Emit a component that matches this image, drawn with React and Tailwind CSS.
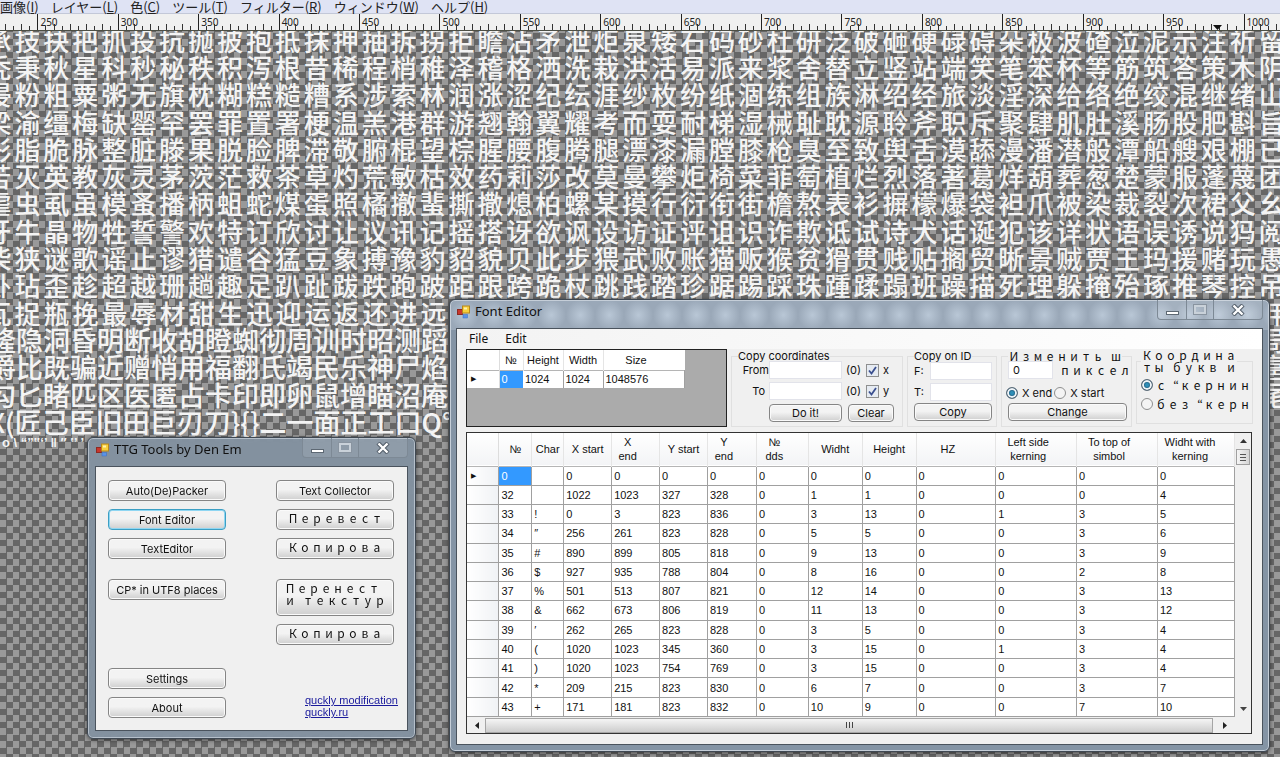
import { useState } from "react";

const menus = [
  ["画像", "I"],
  ["レイヤー", "L"],
  ["色", "C"],
  ["ツール", "T"],
  ["フィルター", "R"],
  ["ウィンドウ", "W"],
  ["ヘルプ", "H"],
];

const rulerMarks = [200, 250, 300, 350, 400, 450, 500, 550, 600, 650, 700, 750, 800, 850, 900, 950, 1000];

// full rows of the glyph atlas, 45 cells each
const wideRows = [
  "承技抉把抓投抗抛披抱抵抹押抽拆拐拒瞻沾矛泄炬泉矮石码砂杜研泛破砸硬碌碍朵极波碴泣泥示注祈留",
  "秃秉秋星科秒秘秩积泻根昔稀程梢稚泽稽格洒洗栽洪活易派来浆舍替立竖站端笑笔笨杯等筋筑答策木阴",
  "侵粉粗粟粥无旗枕糊糕糙糟系涉索林润涨涩纪纭涯纱枚纷纸涸练组族淋绍经旅淡淫深给络绝绞混继绪山",
  "梁渝缰梅缺罂罕罢罪置署梗温羔港群游翘翰翼耀考而耍耐梯湿械耻耽源聆斧职斥聚肆肌肚溪肠股肥斟旨",
  "彤脂脆脉整脏滕果脱脸脾滞敬腑棍望棕腥腰腹腾腿漂漆漏膛膝枪臭至致舆舌漠舔漫潘潜般潭船艘艰棚已",
  "苦灭英教灰灵茅茨茫救茶草灼荒敏枯效药莉莎改莫曼攀炬椅菜菲萄植烂烈落著葛烊葫葬葱楚蒙服蓬蔑团",
  "虐虫虱虽模蚤播柄蛆蛇煤蛋照橘撤蜚撕撒熄柏螺某摸行衍衔街檐熬表衫摒檬爆袋袒爪被染裁裂次裙父幺",
  "牙牛晶物牲誓警欢特订欣讨让议讯记摇搭讶欲讽设访证评诅识诈欺诋试诗犬话诞犯该详状语误诱说犸阅",
  "柴狭谜歌谣止谬猎谴谷猛豆象搏豫豹貂貌贝此步猥武败账猫贩猴贫猾贯贱贴搁贸晰景贼贾王玛援赌玩愚",
  "卧玷歪趁超越珊趟趣足趴趾跋跌跑跛距跟跨跪杖跳践踏珍踞踢踩珠踵蹂蹋班躁描死理躲掩殆琢推琴控吊",
];

// rows that run behind the editor window, with the glyph that shows again at its right
const narrowRows = [
  ["隆隐洞昏明断收胡瞪蜘彻周训时昭测蹈", "局"],
  ["爵比既骗近赠悄用福翻氏竭民乐神尸焰", "扈"],
  ["勾匕睹匹区医匿占卡印即卵鼠增瞄沼庵", "尾"],
  ["X(匠己臣旧田巨刃刀}{}二一面正工口Q°", ""],
];

const fontColumns = [
  { label: "№", width: "w-[33px]" },
  { label: "Char", width: "w-8" },
  { label: "X start", width: "w-12" },
  { label: "X\nend", width: "w-12", pad: "pr-4" },
  { label: "Y start", width: "w-12" },
  { label: "Y\nend", width: "w-[49px]", pad: "pr-4" },
  { label: "№\ndds", width: "w-[52px]", pad: "pr-4" },
  { label: "Widht", width: "w-[54px]" },
  { label: "Height", width: "w-[54px]" },
  { label: "HZ", width: "w-20", pad: "pr-4" },
  { label: "Left side\nkerning", width: "w-[81px]", pad: "pr-4" },
  { label: "To top of\nsimbol", width: "w-[81px]", pad: "pr-4" },
  { label: "Widht with\nkerning", width: "w-[77px]", pad: "pr-3" },
];

const fontRows = [
  ["0", "", "0", "0", "0", "0", "0", "0", "0", "0", "0", "0", "0"],
  ["32", "", "1022", "1023", "327", "328", "0", "1", "1", "0", "0", "0", "4"],
  ["33", "!", "0", "3", "823", "836", "0", "3", "13", "0", "1", "3", "5"],
  ["34", "″", "256", "261", "823", "828", "0", "5", "5", "0", "0", "3", "6"],
  ["35", "#", "890", "899", "805", "818", "0", "9", "13", "0", "0", "3", "9"],
  ["36", "$", "927", "935", "788", "804", "0", "8", "16", "0", "0", "2", "8"],
  ["37", "%", "501", "513", "807", "821", "0", "12", "14", "0", "0", "3", "13"],
  ["38", "&", "662", "673", "806", "819", "0", "11", "13", "0", "0", "3", "12"],
  ["39", "′", "262", "265", "823", "828", "0", "3", "5", "0", "0", "3", "4"],
  ["40", "(", "1020", "1023", "345", "360", "0", "3", "15", "0", "1", "3", "4"],
  ["41", ")", "1020", "1023", "754", "769", "0", "3", "15", "0", "0", "3", "4"],
  ["42", "*", "209", "215", "823", "830", "0", "6", "7", "0", "0", "3", "7"],
  ["43", "+", "171", "181", "823", "832", "0", "10", "9", "0", "0", "7", "10"],
];

function AppIcon() {
  return (
    <svg width="14" height="14" viewBox="0 0 14 14">
      <rect x="0.5" y="4.5" width="5" height="5" fill="#c8372d" stroke="#8f2a22" />
      <rect x="5.5" y="1" width="7" height="7" fill="#f7cf3c" stroke="#b8871a" />
      <rect x="7" y="2.5" width="3" height="2" fill="#fff2b0" />
      <rect x="6" y="9.5" width="4.5" height="3.5" fill="#5b93e6" stroke="#3b6cc0" strokeWidth="0.5" />
    </svg>
  );
}

function CaptionButtons() {
  return (
    <div className="flex h-5 rounded-b border border-t-0 border-[#7d8995] bg-white/10">
      <button aria-label="Minimize" className="flex w-[29px] items-end justify-center border-r border-[#7d8995] pb-1">
        <span className="h-1 w-[13px] border border-[#5d6873] bg-white" />
      </button>
      <button aria-label="Maximize" className="flex w-[27px] items-center justify-center border-r border-[#7d8995]">
        <span className="h-[9px] w-3 border-2 border-[#c9d1d9] outline outline-[#8994a0]" />
      </button>
      <button aria-label="Close" className="flex w-12 items-center justify-center">
        <svg width="14" height="12" viewBox="0 0 14 12">
          <path d="M2 1l10 10M12 1l-10 10" stroke="#55606c" strokeWidth="4.4" />
          <path d="M2.5 1.5l9 9M11.5 1.5l-9 9" stroke="#fff" strokeWidth="2.4" />
        </svg>
      </button>
    </div>
  );
}

function TitleBar({ title }) {
  return (
    <div className="flex h-7 items-start justify-between">
      <div className="flex h-6 items-center gap-1 pl-px">
        <AppIcon />
        <h2 className="font-['Noto_Sans',sans-serif] text-[13px] text-[#111]">{title}</h2>
      </div>
      <CaptionButtons />
    </div>
  );
}

// Cyrillic falls back to the full-width forms of the Japanese system font
function WideText({ text }) {
  return (
    <span className="inline-flex font-['Noto_Sans_CJK_JP',sans-serif] text-[12px] leading-3 whitespace-pre">
      {[...text].map((char, i) => (
        <span key={i} className={char === " " || char === "“" ? "w-1.5 text-center" : "w-3 text-center"}>
          {char}
        </span>
      ))}
    </span>
  );
}

function WinButton({ children, className = "h-[21px]", active }) {
  return (
    <button
      className={`flex w-full items-center justify-center overflow-hidden rounded-sm border bg-linear-to-b from-[#f3f3f3] from-45% to-[#cfcfcf] to-100% font-['Inter',sans-serif] text-[11px] leading-3 text-[#111] ${
        active ? "border-[#3c9fc4] shadow-[inset_0_0_0_1px_#8fd6f2]" : "border-[#858585] shadow-[inset_0_0_0_1px_#fafafa]"
      } ${className}`}
    >
      {children}
    </button>
  );
}

function TextField({ label, id, labelWidth, value = "" }) {
  return (
    <>
      <label htmlFor={id} className={labelWidth}>
        {label}
      </label>
      <input id={id} defaultValue={value} className="h-[18px] w-full min-w-0 border border-[#e2e3ea] bg-white px-1" />
    </>
  );
}

function RadioOption({ name, label, checked, className = "gap-1" }) {
  return (
    <label className={`flex items-center whitespace-nowrap ${className}`}>
      <input
        type="radio"
        name={name}
        defaultChecked={checked}
        className="size-3 shrink-0 appearance-none rounded-full border border-[#8e8f8f] bg-[#f4f4f4] checked:border-[#5a6b78] checked:bg-radial checked:from-[#2f8fb8] checked:from-20% checked:to-[#0f3c5a] checked:to-60% checked:shadow-[inset_0_0_0_2px_#eef4f8]"
      />
      {label}
    </label>
  );
}

function AxisCheck({ label }) {
  const [checked, setChecked] = useState(true);
  return (
    <label className="flex items-center gap-1">
      <span className="grid size-[13px] place-items-center border border-[#8e8f8f] bg-[#e6ebf2]">
        <input
          type="checkbox"
          checked={checked}
          onChange={(e) => setChecked(e.target.checked)}
          className="col-start-1 row-start-1 size-[11px] appearance-none"
        />
        {checked && (
          <svg width="9" height="9" viewBox="0 0 9 9" className="pointer-events-none col-start-1 row-start-1">
            <path d="M1 4.5L3.5 7.5L8 1" fill="none" stroke="#3a4f8f" strokeWidth="1.8" />
          </svg>
        )}
      </span>
      {label}
    </label>
  );
}

function Ruler() {
  return (
    <div className="overflow-hidden border-t border-b border-t-[#c3c8d8] border-b-[#4d4f45] bg-[#f0f0f0]">
      <div className="-mr-[44px] -ml-[43px] flex h-4">
        {rulerMarks.map((mark) => (
          <div key={mark} className="flex-1 border-l border-[#222] font-['Noto_Sans',sans-serif] text-[10px] text-[#222]">
            <div className="grid h-4">
              <span className="col-start-1 row-start-1 pl-0.5 leading-4">{mark}</span>
              <div className="col-start-1 row-start-1 flex items-end">
                {[0, 1, 2, 3, 4, 5, 6, 7, 8, 9].map((n) => (
                  <span
                    key={n}
                    className={`flex-1 ${n === 0 ? "" : "border-l border-[#333]"} ${n % 2 === 0 ? "h-1.5" : "h-1"}`}
                  />
                ))}
              </div>
            </div>
          </div>
        ))}
      </div>
    </div>
  );
}

function GlyphAtlas() {
  return (
    <div className="overflow-hidden font-['Noto_Sans_CJK_SC',sans-serif] text-[26px] font-medium text-[#f4f4f4]">
      <div className="-mt-[5px] -mr-1.5 -ml-4 flex h-[273px] flex-col">
        {wideRows.map((row) => (
          <div key={row} className="flex flex-1 items-center text-center leading-none">
            {[...row].map((glyph, i) => (
              <span key={i} className="w-0 flex-1 whitespace-nowrap">
                {glyph}
              </span>
            ))}
          </div>
        ))}
      </div>
      <div className="-ml-4 flex h-[27px] items-center text-center leading-none">
        {[..."瓦捉瓶挽最辱材甜生迅迎运返还进远"].map((glyph) => (
          <span key={glyph} className="w-[29px]">
            {glyph}
          </span>
        ))}
        <span className="ml-auto w-4">用</span>
      </div>
      <div className="-mr-1.5 -ml-[11px] flex h-[109px] flex-col text-[27px]">
        {narrowRows.map(([row, last]) => (
          <div key={row} className="flex flex-1 items-center justify-between leading-none whitespace-nowrap">
            <span>{row}</span>
            <span>{last}</span>
          </div>
        ))}
      </div>
      <div className="pt-0.5 pl-0.5 font-['Liberation_Sans',sans-serif] text-[13px] leading-3 font-bold whitespace-nowrap">
        o \ “”‟‘’ ‖ ′′ ‛’ ’ ·
      </div>
    </div>
  );
}

function ToolsWindow() {
  return (
    <section className="absolute top-[437px] left-[87px] w-[329px] rounded-md border border-[#3f4852] bg-[#8494a5]/85 px-[7px] pb-[7px] shadow-[0_1px_4px_#0008,inset_0_0_0_1px_#b5bfca] backdrop-blur-xs">
      <TitleBar title="TTG Tools by Den Em" />
      <div className="flex gap-[50px] border border-[#4a535d] bg-[#f0f0f0] pt-[13px] pr-1 pb-3 pl-3">
        <div className="flex w-[118px] flex-col gap-2">
          <WinButton>Auto(De)Packer</WinButton>
          <WinButton active>Font Editor</WinButton>
          <WinButton>TextEditor</WinButton>
          <WinButton className="mt-3 h-[21px]">CP* in UTF8 places</WinButton>
          <WinButton className="mt-[60px] h-[21px]">Settings</WinButton>
          <WinButton>About</WinButton>
        </div>
        <div className="flex flex-1 flex-col gap-2">
          <div className="flex w-[118px] flex-col gap-2">
            <WinButton>Text Collector</WinButton>
            <WinButton className="h-[21px] pb-1">
              <WideText text="Перевест" />
            </WinButton>
            <WinButton className="h-[21px] pb-1">
              <WideText text="Копирова" />
            </WinButton>
            <WinButton className="mt-3 h-[37px] pb-2">
              <span className="flex flex-col items-start">
                <WideText text="Перенест" />
                <WideText text="и текстур" />
              </span>
            </WinButton>
            <WinButton className="h-[21px] pb-1">
              <WideText text="Копирова" />
            </WinButton>
          </div>
          <div className="mt-auto flex flex-col items-start pl-[29px] text-[11px] leading-3 whitespace-nowrap text-[#1a1a9c] underline">
            <a href="#modification">quckly modification</a>
            <a href="#site">quckly.ru</a>
          </div>
        </div>
      </div>
    </section>
  );
}

function TextureTable() {
  return (
    <div className="h-[78px] w-[261px] shrink-0 border border-[#222] bg-[#ababab]">
      <table className="w-[218px] table-fixed border-collapse bg-white text-[11px] leading-3 text-[#111]">
        <thead>
          <tr className="h-5 border-b border-[#b5b5b5]">
            <th className="w-8 border-r border-[#ddd]" />
            <th className="w-6 border-r border-[#e5e5e5] font-normal">№</th>
            <th className="w-10 border-r border-[#e5e5e5] font-normal">Height</th>
            <th className="w-10 border-r border-[#e5e5e5] font-normal">Width</th>
            <th className="pr-4 font-normal">Size</th>
          </tr>
        </thead>
        <tbody>
          <tr className="h-[18px]">
            <td className="border-r border-[#ddd] pl-1 text-[7px]">▶</td>
            <td className="bg-[#3399ff] pl-0.5 text-white">0</td>
            <td className="border-r border-[#a0a0a0] pl-0.5">1024</td>
            <td className="border-r border-[#a0a0a0] pl-0.5">1024</td>
            <td className="border-r border-[#a0a0a0] pl-0.5">1048576</td>
          </tr>
        </tbody>
      </table>
    </div>
  );
}

function CopyGroups() {
  return (
    <div className="flex flex-1 items-end gap-1 pl-1 font-['Inter',sans-serif] text-[11px] leading-3 text-[#111]">
      <fieldset className="h-[77px] w-[172px] border border-[#e0e0e0] pl-1.5">
        <legend className="h-3">Copy coordinates</legend>
        <div className="-mt-px grid grid-cols-[27px_73px_16px_auto] items-center gap-x-1 gap-y-[3px]">
          <TextField id="from" label="From" labelWidth="-mr-1 text-right" />
          <span>(0)</span>
          <AxisCheck label="x" />
          <TextField id="to" label="To" labelWidth="text-right" />
          <span>(0)</span>
          <AxisCheck label="y" />
        </div>
        <div className="mt-1 ml-[31px] grid grid-cols-[73px_46px] gap-1.5">
          <WinButton className="h-[18px]">Do it!</WinButton>
          <WinButton className="h-[18px]">Clear</WinButton>
        </div>
      </fieldset>
      <fieldset className="h-[77px] w-[90px] border border-[#e0e0e0] pr-1 pl-1.5">
        <legend className="h-3 whitespace-nowrap">Copy on ID</legend>
        <div className="grid grid-cols-[12px_62px] items-center gap-x-1 gap-y-[3px]">
          <TextField id="idFrom" label="F:" />
          <TextField id="idTo" label="T:" />
        </div>
        <WinButton className="mt-0.5 h-[18px]">Copy</WinButton>
      </fieldset>
      <fieldset className="h-[77px] w-[130px] border border-[#e0e0e0] pr-1 pl-1.5">
        <legend className="h-3">
          <WideText text="Изменить ш" />
        </legend>
        <div className="-mt-px -mr-1 flex items-center gap-1.5">
          <input
            aria-label="Пиксели"
            defaultValue="0"
            className="h-[18px] w-[45px] shrink-0 border border-[#e2e3ea] bg-white px-1"
          />
          <WideText text="пиксел" />
        </div>
        <div className="-ml-0.5 flex h-6 items-center gap-0.5 pt-1">
          <RadioOption name="edge" label="X end" checked />
          <RadioOption name="edge" label="X start" />
        </div>
        <WinButton className="h-[18px]">Change</WinButton>
      </fieldset>
      <fieldset className="mb-[3px] h-[75px] w-[117px] border border-[#e0e0e0] pl-1">
        <legend className="flex h-6 flex-col">
          <WideText text="Координа" />
          <WideText text="ты букв и" />
        </legend>
        <div className="pt-0.5">
          <RadioOption name="kerning" label={<WideText text="с “кернин" />} checked className="h-[19px] gap-0.5" />
          <RadioOption name="kerning" label={<WideText text="без “керн" />} className="h-[19px] gap-0.5" />
        </div>
      </fieldset>
    </div>
  );
}

function CoordinatesTable() {
  return (
    <div className="mt-[5px] border border-[#333] bg-[#f0f0f0]">
      <div className="flex">
        <table className="h-[284px] flex-1 table-fixed border-collapse bg-white text-[11px] leading-3 text-[#111]">
          <thead>
            <tr className="h-[33px] border-b border-[#b5b5b5] bg-linear-to-b from-white to-[#f3f4f6] leading-[14px]">
              <th className="w-8 border-r border-[#ddd]" />
              {fontColumns.map((col) => (
                <th
                  key={col.label}
                  className={`border-r border-[#e5e5e5] font-normal whitespace-pre ${col.width} ${col.pad || ""}`}
                >
                  {col.label}
                </th>
              ))}
            </tr>
          </thead>
          <tbody>
            {fontRows.map((row, r) => (
              <tr key={row[0]} className="border-b border-[#a0a0a0]">
                <td className="border-r border-[#a0a0a0] bg-linear-to-r from-white to-[#f0f2f5] pl-1 text-[7px]">
                  {r === 0 ? "▶" : ""}
                </td>
                {row.map((cell, c) => (
                  <td
                    key={c}
                    className={`border-r border-[#a0a0a0] pl-0.5 ${r === 0 && c === 0 ? "bg-[#3399ff] text-white" : ""}`}
                  >
                    {cell}
                  </td>
                ))}
              </tr>
            ))}
          </tbody>
        </table>
        <div className="flex w-4 flex-col items-center py-1">
          <svg width="7" height="8" viewBox="0 0 7 8">
            <path d="M0 6l3.5-4L7 6z" fill="#333" />
          </svg>
          <div className="mt-1 flex h-4 w-[14px] flex-col items-center justify-center gap-0.5 border border-[#a0a0a0] bg-linear-to-r from-[#f5f5f5] to-[#d5d5d5]">
            <span className="h-px w-1.5 bg-[#555]" />
            <span className="h-px w-1.5 bg-[#555]" />
            <span className="h-px w-1.5 bg-[#555]" />
          </div>
          <svg width="7" height="8" viewBox="0 0 7 8" className="mt-auto">
            <path d="M0 2l3.5 4L7 2z" fill="#444" />
          </svg>
        </div>
      </div>
      <div className="flex h-4 items-center">
        <div className="flex w-[18px] justify-center">
          <svg width="5" height="7" viewBox="0 0 5 7">
            <path d="M5 0L1 3.5L5 7z" fill="#222" />
          </svg>
        </div>
        <div className="flex h-[15px] flex-1 items-center justify-center gap-0.5 border border-[#a5a5a5] bg-linear-to-b from-[#f5f5f5] to-[#cdcdcd]">
          <span className="h-1.5 w-px bg-[#444]" />
          <span className="h-1.5 w-px bg-[#444]" />
          <span className="h-1.5 w-px bg-[#444]" />
        </div>
        <div className="flex w-[38px] pl-2.5">
          <svg width="5" height="7" viewBox="0 0 5 7">
            <path d="M0 0l4 3.5L0 7z" fill="#222" />
          </svg>
        </div>
      </div>
    </div>
  );
}

function FontEditorWindow() {
  return (
    <section className="absolute top-[299px] left-[449px] w-[821px] rounded-md border border-[#3f4852] bg-[#8494a5] bg-[radial-gradient(closest-side,#b9c7d6,#9aa8b8)] bg-size-[29px_30px] bg-repeat-x px-[6px] pb-[6px] shadow-[0_1px_4px_#0008,inset_0_0_0_1px_#c5ced8]">
      <TitleBar title="Font Editor" />
      <div className="border border-[#4a535d] bg-[#f0f0f0] pb-2.5">
        <nav className="flex h-5 items-center gap-[17px] bg-linear-to-r from-[#f3f3f3] to-white pl-3 font-['Noto_Sans',sans-serif] text-[12px] text-[#111]">
          <button>File</button>
          <button>Edit</button>
        </nav>
        <div className="pr-2.5 pl-[9px]">
          <div className="flex">
            <TextureTable />
            <CopyGroups />
          </div>
          <CoordinatesTable />
        </div>
      </div>
    </section>
  );
}

export default function App() {
  return (
    <div className="relative min-h-screen overflow-hidden bg-[repeating-conic-gradient(#666_0_25%,#999_0_50%)] bg-size-[13px_13px] font-['Liberation_Sans',sans-serif]">
      <nav className="flex h-[13px] items-center gap-3 bg-[#dfe3f4] font-['Noto_Sans_CJK_JP',sans-serif] text-[13px] leading-3 whitespace-nowrap text-[#222]">
        {menus.map(([label, key]) => (
          <button key={key}>
            {label}(<u>{key}</u>)
          </button>
        ))}
      </nav>
      <Ruler />
      <svg width="10" height="5" viewBox="0 0 10 5" className="absolute top-[25px] left-[1213px]">
        <path d="M0 0h9L4.5 5z" fill="#111" />
      </svg>
      <GlyphAtlas />
      <FontEditorWindow />
      <ToolsWindow />
    </div>
  );
}
